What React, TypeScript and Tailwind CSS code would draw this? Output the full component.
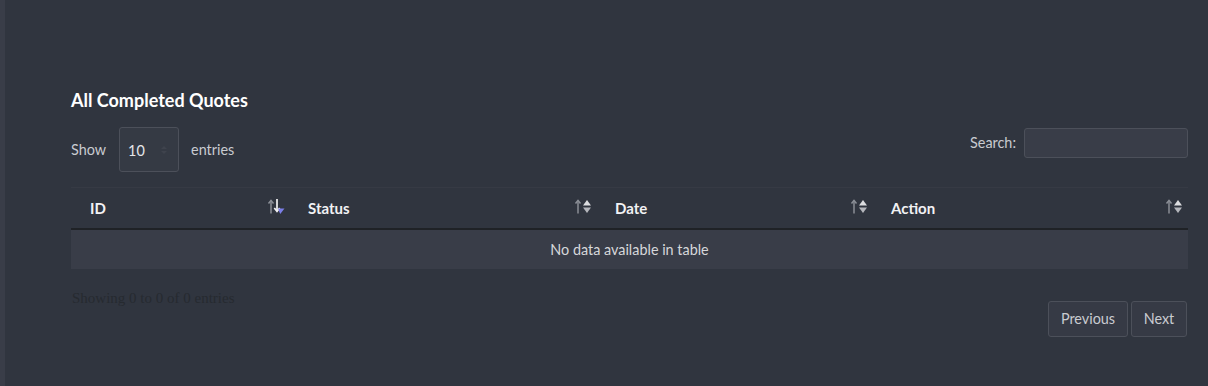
import React from "react";

function SortIcon({ active }: { active?: boolean }) {
  return (
    <svg width="20" height="17" viewBox="0 0 20 17" className="block">
      <path d="M4 15.5 V2.5" stroke="#8a8e96" strokeWidth="1.5" fill="none" />
      <path d="M1.5 5.5 L4 2.5 L6.5 5.5" stroke="#8a8e96" strokeWidth="1.5" fill="none" />
      {active ? (
        <>
          <path d="M10 1 V13" stroke="#f2f2f4" strokeWidth="1.7" fill="none" />
          <path d="M7.3 10 L10 13.3 L12.7 10" stroke="#f2f2f4" strokeWidth="1.7" fill="none" />
          <path d="M11 10.5 L17.5 10.5 L13.2 16 Z" fill="#7b7fe8" />
        </>
      ) : (
        <>
          <path d="M9 7.5 L13 2 L17 7.5 Z" fill="#dcdde0" />
          <path d="M9 9.5 L13 15 L17 9.5 Z" fill="#b4b6bc" />
        </>
      )}
    </svg>
  );
}

export default function App() {
  const font = { fontFamily: "Lato, 'Open Sans', sans-serif" };
  return (
    <div className="w-[1208px] h-[386px] flex bg-[#30353f] overflow-hidden" style={font}>
      <div className="w-[5px] h-full bg-[#393d48]" />
      <div className="flex-1 pl-[66px] pr-[20px] pt-[88px]">
        <h2 className="text-[18px] leading-[24px] font-bold text-white">All Completed Quotes</h2>
        <div className="mt-[15px] flex items-start justify-between">
          <div className="flex items-center text-[14.4px] text-[#c9cbd0]">
            <span>Show</span>
            <div className="ml-[13px] w-[60px] h-[45px] rounded-[3px] border border-[#4c505a] bg-[#353a44] flex items-center pl-[8px] pr-[10px] justify-between">
              <span className="text-[14.4px] text-[#e4e5e8] mt-[2px]">10</span>
              <svg width="8" height="12" viewBox="0 0 8 12">
                <path d="M1 5 L4 2 L7 5 Z" fill="#3f434d" />
                <path d="M1 7 L4 10 L7 7 Z" fill="#3f434d" />
              </svg>
            </div>
            <span className="ml-[12px]">entries</span>
          </div>
          <div className="flex items-center text-[14.4px] text-[#c9cbd0] mt-[1px]">
            <span>Search:</span>
            <div className="ml-[8px] w-[164px] h-[30px] rounded-[3px] border border-[#4c505a] bg-[#393d48]" />
          </div>
        </div>
        <div className="mt-[15px] border-t border-[#363a44]">
          <div className="flex h-[42px] items-center border-b-2 border-[#1f2226] text-[15px] font-bold text-[#f2f2f4]">
            <div className="w-[226px] flex items-center justify-between pl-[19px] pr-[10px] pt-[1px]">
              <span>ID</span>
              <span className="-mt-[4px]"><SortIcon active /></span>
            </div>
            <div className="w-[307px] flex items-center justify-between pl-[11px] pr-[10px] pt-[1px]">
              <span>Status</span>
              <span className="-mt-[4px]"><SortIcon /></span>
            </div>
            <div className="w-[276px] flex items-center justify-between pl-[11px] pr-[10px] pt-[1px]">
              <span>Date</span>
              <span className="-mt-[4px]"><SortIcon /></span>
            </div>
            <div className="flex-1 flex items-center justify-between pl-[11px] pr-[3px] pt-[1px]">
              <span>Action</span>
              <span className="-mt-[4px]"><SortIcon /></span>
            </div>
          </div>
          <div className="h-[39px] bg-[#393d48] flex items-center justify-center text-[14.4px] text-[#d6d7da]">
            No data available in table
          </div>
        </div>
        <div className="mt-[18px] flex items-start justify-between">
          <div
            className="text-[15px] text-[#262a30] pl-[1px]"
            style={{ fontFamily: "'Liberation Serif', serif" }}
          >
            Showing 0 to 0 of 0 entries
          </div>
          <div className="flex gap-[3px] mt-[14px] mr-[1px]">
            <div className="h-[36px] w-[80px] flex items-center justify-center rounded-[3px] border border-[#4c505a] bg-[#363a45] text-[14.4px] text-[#c9cbd0]">
              Previous
            </div>
            <div className="h-[36px] w-[56px] flex items-center justify-center rounded-[3px] border border-[#4c505a] bg-[#363a45] text-[14.4px] text-[#c9cbd0]">
              Next
            </div>
          </div>
        </div>
      </div>
    </div>
  );
}
